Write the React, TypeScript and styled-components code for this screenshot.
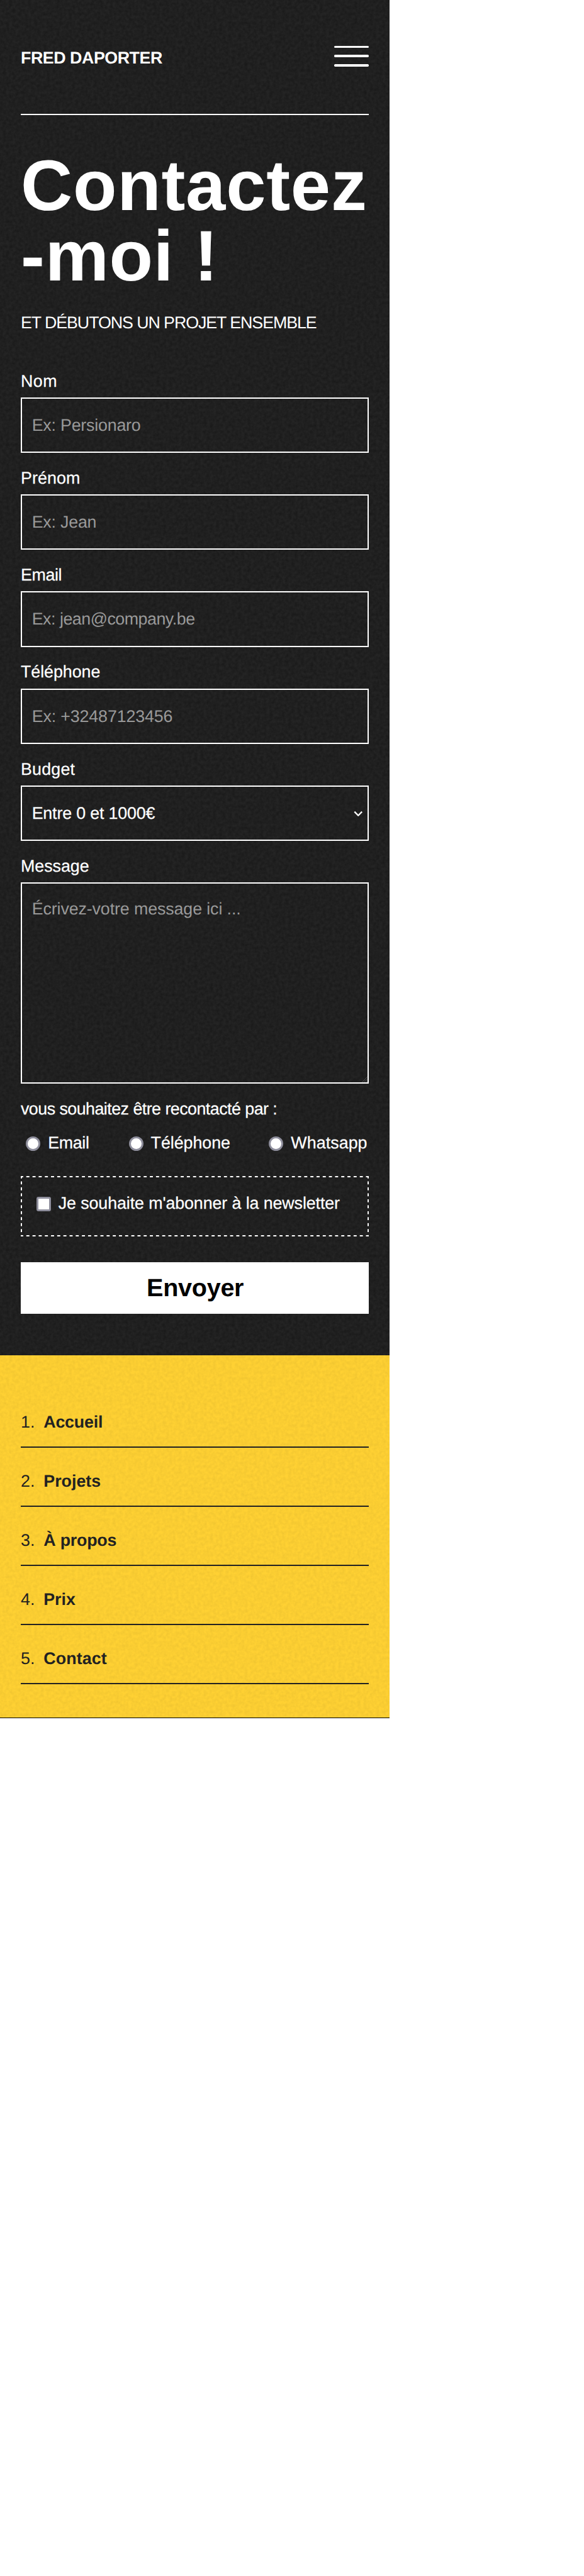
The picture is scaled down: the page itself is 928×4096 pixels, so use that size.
import React from "react";
import styled, { createGlobalStyle, css } from "styled-components";

const SCALE = 928 / 1125;
const u = (n: number) => `${(n * SCALE).toFixed(3)}px`;

const ink = "#222222";
const paper = "#ffffff";
const sun = "#ffd133";
const muted = "#999999";

const GlobalStyle = createGlobalStyle`
  *, *::before, *::after { box-sizing: border-box; }
  html, body { margin: 0; padding: 0; background: #ffffff; }
  body, input, select, textarea, button {
    font-family: "Liberation Sans", Arial, Helvetica, sans-serif;
    text-rendering: geometricPrecision;
  }
`;

const type = css<{ $track?: number }>`
  font-size: ${u(32.5)};
  line-height: ${u(40)};
  letter-spacing: ${(p) => u((p.$track ?? 0) - 0.25)};
  white-space: nowrap;
`;

const Page = styled.div`
  width: ${u(750)};
`;

const Section = styled.section<{ $tone: string }>`
  position: relative;
  isolation: isolate;
  padding: 0 ${u(40)};
  background: ${(p) => p.$tone};
`;

const GrainLayer = styled.svg`
  position: absolute;
  inset: 0;
  z-index: -1;
  width: 100%;
  height: 100%;
  pointer-events: none;
`;

const Header = styled.header`
  display: flex;
  justify-content: space-between;
  align-items: flex-start;
  height: ${u(222)};
  padding-top: ${u(88)};
  border-bottom: 2px solid ${paper};
`;

const Brand = styled.a<{ $track?: number }>`
  ${type}
  margin-top: ${u(4)};
  font-weight: 700;
  color: ${paper};
`;

const MenuButton = styled.button`
  display: flex;
  flex-direction: column;
  justify-content: space-between;
  width: ${u(66)};
  height: ${u(40)};
  padding: 0;
  border: 0;
  background: none;
`;

const Bar = styled.span`
  height: ${u(4)};
  border-radius: ${u(2)};
  background: ${paper};
`;

const Title = styled.h1`
  margin: ${u(69)} 0 0;
  font-size: ${u(138)};
  line-height: ${u(136)};
  letter-spacing: ${u(0.9)};
  font-weight: 700;
  white-space: nowrap;
  color: ${paper};
`;

const Subtitle = styled.p<{ $track?: number }>`
  ${type}
  margin: ${u(40)} 0 ${u(72)};
  color: ${paper};
`;

const Form = styled.form`
  display: flex;
  flex-direction: column;
  padding-bottom: ${u(80)};
`;

const Fields = styled.div`
  display: flex;
  flex-direction: column;
  gap: ${u(28.9)};
`;

const Field = styled.div`
  display: flex;
  flex-direction: column;
  gap: ${u(11.1)};
`;

const Label = styled.label<{ $track?: number }>`
  ${type}
  color: ${paper};
  -webkit-text-stroke: 0.25px ${paper};
`;

const box = css<{ $track?: number }>`
  ${type}
  display: block;
  width: 100%;
  margin: 0;
  border: 2px solid ${paper};
  border-radius: 0;
  outline: 0;
  background: transparent;
  color: ${paper};
  appearance: none;
  &::placeholder {
    color: ${muted};
    opacity: 1;
  }
`;

const Input = styled.input<{ $track?: number }>`
  ${box}
  height: ${u(107)};
  padding: ${u(1)} ${u(19)} 0;
`;

const Select = styled.select<{ $track?: number }>`
  ${box}
  height: ${u(107)};
  padding: ${u(1)} ${u(19)} 0;
  -webkit-text-stroke: 0.25px ${paper};
`;

const TextArea = styled.textarea<{ $track?: number }>`
  ${box}
  height: ${u(388)};
  padding: ${u(28.6)} ${u(19)};
  resize: none;
`;

const ControlWrap = styled.div`
  position: relative;
`;

const Chevron = styled.svg`
  position: absolute;
  right: ${u(10)};
  top: ${u(47)};
  width: ${u(20)};
  height: ${u(15)};
  pointer-events: none;
`;

const Grip = styled.svg`
  position: absolute;
  right: 2px;
  bottom: 2px;
  width: ${u(11)};
  height: ${u(11)};
`;

const Question = styled.p<{ $track?: number }>`
  ${type}
  margin: 0;
  color: ${paper};
  -webkit-text-stroke: 0.25px ${paper};
`;

const Choices = styled.div`
  display: grid;
  grid-template-columns: ${u(198)} ${u(270)} auto;
  padding-left: ${u(10)};
  margin: ${u(26)} 0 ${u(43.1)};
`;

const Choice = styled.label<{ $track?: number }>`
  ${type}
  display: flex;
  align-items: center;
  gap: ${u(14.5)};
  color: ${paper};
  -webkit-text-stroke: 0.25px ${paper};
`;

const Tick = styled.input<{ $round?: boolean }>`
  appearance: none;
  flex: none;
  width: ${u(28)};
  height: ${u(28)};
  margin: ${u(2)} 0 0;
  border: ${u(4.2)} solid #8f8f9d;
  border-radius: ${(p) => (p.$round ? "50%" : u(4))};
  background: ${paper};
`;

const dashX = `linear-gradient(90deg, ${paper} 50%, transparent 50%)`;
const dashY = `linear-gradient(180deg, ${paper} 50%, transparent 50%)`;

const Newsletter = styled.div`
  height: ${u(117)};
  padding: ${u(32.9)} 0 0 ${u(30)};
  background-image: ${dashX}, ${dashX}, ${dashY}, ${dashY};
  background-size: ${u(11.9)} 2px, ${u(11.9)} 2px, 2px ${u(11.5)}, 2px ${u(11.5)};
  background-position: -1px 0, -1px 100%, 0 -1px, 100% -1px;
  background-repeat: repeat-x, repeat-x, repeat-y, repeat-y;
`;

const Submit = styled.button`
  height: ${u(100)};
  margin-top: ${u(49)};
  padding: ${u(2)} 0 0 ${u(2)};
  border: 0;
  background: ${paper};
  color: #000000;
  font-size: ${u(48)};
  font-weight: 700;
  letter-spacing: ${u(-0.35)};
`;

const FooterNav = styled.nav`
  height: ${u(698)};
  padding-top: ${u(64)};
`;

const NavItem = styled.a<{ $track?: number }>`
  ${type}
  display: flex;
  align-items: flex-end;
  height: ${u(114)};
  padding-bottom: ${u(27)};
  border-bottom: 2px solid ${ink};
  color: ${ink};
`;

const NavIndex = styled.span`
  width: ${u(44)};
  letter-spacing: 0;
`;

const NavName = styled.span`
  font-weight: 700;
`;

const BottomRule = styled.div`
  height: 1px;
  background: #000000;
`;

function Grain({ id, gain, offset }: { id: string; gain: number; offset: number }) {
  return (
    <GrainLayer aria-hidden="true">
      <filter id={id} x="0" y="0" width="100%" height="100%" colorInterpolationFilters="sRGB">
        <feTurbulence type="fractalNoise" baseFrequency="0.2" numOctaves="2" seed="4" stitchTiles="stitch" />
        <feColorMatrix type="matrix" values={`0 0 0 0 0  0 0 0 0 0  0 0 0 0 0  ${gain} 0 0 0 ${offset}`} />
      </filter>
      <rect width="100%" height="100%" filter={`url(#${id})`} />
    </GrainLayer>
  );
}

const inputs = [
  { id: "nom", label: "Nom", hint: "Ex: Persionaro", labelTrack: 0.9, track: 0 },
  { id: "prenom", label: "Prénom", hint: "Ex: Jean", labelTrack: 0.38, track: 0 },
  { id: "email", label: "Email", hint: "Ex: jean@company.be", labelTrack: -0.2, track: -0.33 },
  { id: "telephone", label: "Téléphone", hint: "Ex: +32487123456", labelTrack: 0.2, track: 0.09 },
];

const choices = [
  { label: "Email", track: -0.15 },
  { label: "Téléphone", track: 0.2 },
  { label: "Whatsapp", track: 0.35 },
];

const links = [
  { label: "Accueil", track: 0 },
  { label: "Projets", track: 0.25 },
  { label: "À propos", track: 0 },
  { label: "Prix", track: 0.2 },
  { label: "Contact", track: 0.4 },
];

export default function App() {
  return (
    <>
      <GlobalStyle />
      <Page>
        <Section $tone="#242424">
          <Grain id="grain-dark" gain={0.45} offset={-0.105} />
          <Header>
            <Brand $track={-0.3}>FRED DAPORTER</Brand>
            <MenuButton type="button" aria-label="Menu">
              <Bar />
              <Bar />
              <Bar />
            </MenuButton>
          </Header>
          <Title>
            Contactez
            <br />
            -moi !
          </Title>
          <Subtitle $track={-1.05}>ET DÉBUTONS UN PROJET ENSEMBLE</Subtitle>
          <Form>
            <Fields>
              {inputs.map((f) => (
                <Field key={f.id}>
                  <Label htmlFor={f.id} $track={f.labelTrack}>{f.label}</Label>
                  <Input id={f.id} placeholder={f.hint} $track={f.track} />
                </Field>
              ))}
              <Field>
                <Label htmlFor="budget" $track={0.5}>Budget</Label>
                <ControlWrap>
                  <Select id="budget" $track={0.05}>
                    <option>Entre 0 et 1000€</option>
                  </Select>
                  <Chevron viewBox="0 0 20 15" fill="none" stroke={paper} strokeWidth="2.8">
                    <path d="M2.8 3.2 L10 10.6 L17.2 3.2" strokeLinejoin="round" />
                  </Chevron>
                </ControlWrap>
              </Field>
              <Field>
                <Label htmlFor="message" $track={0.23}>Message</Label>
                <ControlWrap>
                  <TextArea id="message" placeholder="Écrivez-votre message ici ..." $track={0.12} />
                  <Grip viewBox="0 0 11 11" stroke="#6a6a6a" strokeWidth="0.8">
                    <path d="M0 11 L11 0 M4 11 L11 4 M8 11 L11 8" />
                  </Grip>
                </ControlWrap>
              </Field>
              <Question $track={-0.38}>vous souhaitez être recontacté par :</Question>
            </Fields>
            <Choices>
              {choices.map((c) => (
                <Choice key={c.label} $track={c.track}>
                  <Tick type="radio" name="contact" $round />
                  {c.label}
                </Choice>
              ))}
            </Choices>
            <Newsletter>
              <Choice $track={0.14}>
                <Tick type="checkbox" />
                Je souhaite m'abonner à la newsletter
              </Choice>
            </Newsletter>
            <Submit type="button">Envoyer</Submit>
          </Form>
        </Section>
        <Section $tone={sun}>
          <Grain id="grain-sun" gain={0.09} offset={-0.025} />
          <FooterNav>
            {links.map((l, i) => (
              <NavItem key={l.label} $track={l.track}>
                <NavIndex>{i + 1}.</NavIndex>
                <NavName>{l.label}</NavName>
              </NavItem>
            ))}
          </FooterNav>
        </Section>
        <BottomRule />
      </Page>
    </>
  );
}
